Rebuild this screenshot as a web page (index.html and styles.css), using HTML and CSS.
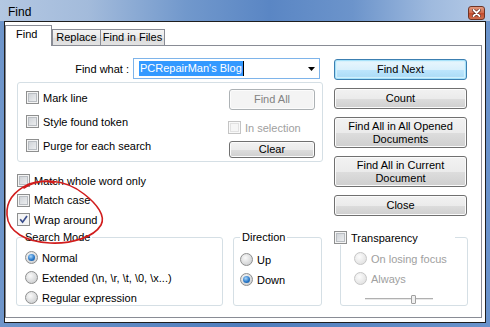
FILE: index.html
```html
<!DOCTYPE html>
<html lang="en">
<head>
    <meta charset="UTF-8">
    <title>Find</title>
    <link rel="stylesheet" href="styles.css">
</head>
<body>

<div class="window">
    <div class="titlebar">
        <span class="title">Find</span>
        <span class="close-btn">
            <svg width="9" height="8" viewBox="0 0 9 8">
                <path d="M1.5 1 L7.5 7 M7.5 1 L1.5 7" stroke="#5a2418" stroke-width="3.2" stroke-linecap="round"/>
                <path d="M1.5 1 L7.5 7 M7.5 1 L1.5 7" stroke="#fff" stroke-width="1.8" stroke-linecap="round"/>
            </svg>
        </span>
    </div>

    <div class="client">
        <div class="tabs">
            <div class="tab active">Find</div>
            <div class="tab tab-replace">Replace</div>
            <div class="tab tab-files">Find in Files</div>
        </div>

        <div class="panel">
            <div class="top">
                <div class="left-col">
                    <div class="find-row">
                        <label>Find what :</label>
                        <div class="combo">
                            <span class="sel">PCRepairMan's Blog</span><span class="caret"></span>
                            <svg class="arrow" width="7" height="4" viewBox="0 0 7 4"><path d="M0 0 H7 L3.5 4 Z" fill="#000"/></svg>
                        </div>
                    </div>

                    <div class="options">
                        <div class="opt-list">
                            <div class="check"><span class="box"></span>Mark line</div>
                            <div class="check"><span class="box"></span>Style found token</div>
                            <div class="check"><span class="box"></span>Purge for each search</div>
                        </div>
                        <div class="opt-side">
                            <div class="btn disabled">Find All</div>
                            <div class="check disabled in-sel"><span class="box"></span>In selection</div>
                            <div class="btn small">Clear</div>
                        </div>
                    </div>

                    <div class="matches">
                        <div class="check"><span class="box"></span>Match whole word only</div>
                        <div class="check"><span class="box"></span>Match case</div>
                        <div class="check"><span class="box checked">
                            <svg width="9" height="9" viewBox="0 0 9 9"><path d="M1.2 4.2 L3.6 7.2 L8 1" fill="none" stroke="#3a4d8c" stroke-width="1.7"/></svg>
                        </span>Wrap around</div>
                    </div>
                </div>

                <div class="actions">
                    <div class="btn primary">Find Next</div>
                    <div class="btn">Count</div>
                    <div class="btn tall">Find All in All Opened<br>Documents</div>
                    <div class="btn tall">Find All in Current<br>Document</div>
                    <div class="btn">Close</div>
                </div>
            </div>

            <div class="bottom">
                <fieldset class="group mode">
                    <legend>Search Mode</legend>
                    <div class="radio-list">
                        <div class="radio"><span class="dot on"></span>Normal</div>
                        <div class="radio"><span class="dot"></span>Extended (\n, \r, \t, \0, \x...)</div>
                        <div class="radio"><span class="dot"></span>Regular expression</div>
                    </div>
                </fieldset>

                <fieldset class="group direction">
                    <legend>Direction</legend>
                    <div class="radio-list">
                        <div class="radio"><span class="dot"></span>Up</div>
                        <div class="radio"><span class="dot on"></span>Down</div>
                    </div>
                </fieldset>

                <fieldset class="group transparency">
                    <legend><span class="check"><span class="box"></span>Transparency</span></legend>
                    <div class="radio-list">
                        <div class="radio disabled"><span class="dot"></span>On losing focus</div>
                        <div class="radio disabled"><span class="dot"></span>Always</div>
                        <div class="slider"><span class="thumb"></span></div>
                    </div>
                </fieldset>
            </div>
        </div>
    </div>

    <!-- red marker drawn over the screenshot -->
    <svg class="annotation" width="490" height="327" viewBox="0 0 490 327">
        <path d="M24 188 C38 178, 64 178, 84 194 C97 204, 106 216, 101 225 C94 237, 72 244, 50 243 C26 242, 8 232, 7 215 C6 201, 14 191, 29 184 C40 180, 48 181, 54 183"
              fill="none" stroke="#d11d1d" stroke-width="1.6" stroke-linecap="round"/>
    </svg>
</div>

</body>
</html>
```

FILE: styles.css
```css
* {
    box-sizing: border-box;
}
body {
    margin: 0;
    font-family: "Liberation Sans", Arial, sans-serif;
    font-size: 11px;
    color: #000;
    background: #fff;
}
.window {
    position: relative;
    width: 490px;
    height: 327px;
    padding: 0 4px 4px;
    display: flex;
    flex-direction: column;
    background: linear-gradient(90deg, #6e95ca, #4f7dbd 50%, #6a93cb);
}
.titlebar {
    height: 21px;
    margin: 0 -4px;
    padding: 0 5px 0 8px;
    display: flex;
    align-items: flex-start;
    justify-content: space-between;
    background: linear-gradient(90deg, #b3c7e2 0%, #a3bbdb 18%, #7198cc 38%, #5a86c4 55%, #6c94cb 72%, #9fbade 88%, #b6cbe7 100%);
}
.title {
    font-size: 12px;
    margin-top: 5px;
}
.close-btn {
    width: 17px;
    height: 14px;
    margin-top: 6px;
    display: flex;
    align-items: center;
    justify-content: center;
    border: 1px solid #6d3527;
    border-radius: 3px;
    background: linear-gradient(#e39a80, #d06a4c 50%, #c24a2d 51%, #d0704f);
}
.client {
    flex: 1;
    background: #fff;
    border: 1px solid #1e1e1e;
    display: flex;
    flex-direction: column;
}
.tabs {
    height: 23px;
    display: flex;
    align-items: flex-end;
}
.tab {
    height: 16px;
    border: 1px solid #898c95;
    border-bottom: none;
    background: linear-gradient(#f3f3f3, #e9e9e9 50%, #dcdcdc 51%, #e2e2e2);
    text-align: center;
    line-height: 15px;
}
.tab.active {
    width: 47px;
    height: 21px;
    margin-bottom: -1px;
    padding: 0 0 3px 10px;
    text-align: left;
    line-height: 17px;
    background: #fff;
    position: relative;
    z-index: 1;
}
.tab-replace {
    width: 49px;
}
.tab-files {
    width: 65px;
    margin-left: -1px;
}
.panel {
    height: 273px;
    margin-right: 3px;
    border: 1px solid #898c95;
    background: #fff;
    padding: 12px 0 0 11px;
}
.top {
    display: flex;
    gap: 11px;
}
.left-col {
    width: 306px;
}
.find-row {
    height: 21px;
    display: flex;
    align-items: center;
    justify-content: flex-end;
    gap: 4px;
    padding-right: 3px;
}
.combo {
    width: 187px;
    height: 21px;
    display: flex;
    align-items: center;
    padding: 0 4px 0 5px;
    border: 1px solid #7eb4ea;
}
.sel {
    background: #3399ff;
    color: #fff;
    line-height: 15px;
    padding: 0 1px;
}
.caret {
    width: 1px;
    height: 15px;
    background: #000;
}
.arrow {
    margin-left: auto;
}
.options {
    height: 80px;
    margin-top: 3px;
    padding: 7px 7px 0 8px;
    display: flex;
    justify-content: space-between;
    border: 1px solid #d5dfe5;
    border-radius: 3px;
}
.opt-list {
    display: flex;
    flex-direction: column;
    gap: 9px;
}
.opt-side {
    width: 86px;
    margin-top: -1px;
    display: flex;
    flex-direction: column;
}
.in-sel {
    margin: 10px 0 6px -1px;
}
.matches {
    margin-top: 11px;
    display: flex;
    flex-direction: column;
    gap: 4.5px;
}

/* checkboxes and radios */
.check, .radio {
    height: 15px;
    display: flex;
    align-items: center;
    gap: 4px;
    white-space: nowrap;
}
.box {
    width: 13px;
    height: 13px;
    flex: none;
    display: flex;
    align-items: center;
    justify-content: center;
    border: 1px solid #8e8f8f;
    background: linear-gradient(135deg, #c9cdd2, #f3f4f5);
    box-shadow: inset 0 0 0 1px #f4f4f4, inset 0 0 0 2px #b9bdc2;
}
.box.checked {
    background: #f4f4f4;
    box-shadow: none;
}
.check.disabled {
    color: #a0a0a0;
}
.check.disabled .box {
    border-color: #c4c4c4;
    background: #f6f6f6;
    box-shadow: inset 0 0 0 1px #f9f9f9, inset 0 0 0 2px #e2e2e2;
}
.dot {
    width: 13px;
    height: 13px;
    flex: none;
    border-radius: 50%;
    border: 1px solid #8e8f8f;
    background: radial-gradient(circle at 40% 35%, #fafafa, #d9dadb 60%, #c4c6c9);
    display: flex;
    align-items: center;
    justify-content: center;
}
.dot.on::after {
    content: "";
    width: 7px;
    height: 7px;
    border-radius: 50%;
    background: radial-gradient(circle at 40% 35%, #a9d6fa, #2a79c9 55%, #124d8f);
}
.radio.disabled {
    color: #a0a0a0;
}
.radio.disabled .dot {
    border-color: #c6c6c6;
    background: radial-gradient(circle at 40% 35%, #fcfcfc, #e8e8e8 60%, #dedede);
}

/* buttons */
.btn {
    height: 21px;
    display: flex;
    align-items: center;
    justify-content: center;
    text-align: center;
    line-height: 13px;
    border: 1px solid #707070;
    border-radius: 3px;
    background: linear-gradient(#f2f2f2, #ebebeb 50%, #dddddd 51%, #cfcfcf);
    box-shadow: inset 0 0 0 1px #fbfbfb;
}
.btn.small {
    height: 17px;
}
.btn.tall {
    height: 31px;
}
.btn.primary {
    border-color: #3c7fb1;
    background: linear-gradient(#eaf6fd, #d9f0fc 50%, #bee6fd 51%, #a7d9f5);
    box-shadow: inset 0 0 0 1px #a6e1f9, inset 0 0 1px 2px #d6f1fc;
}
.btn.disabled {
    color: #838383;
    border-color: #adb2b5;
    background: #f4f4f4;
    box-shadow: inset 0 0 0 1px #fcfcfc;
}
.actions {
    width: 133px;
    margin-top: 1px;
    display: flex;
    flex-direction: column;
    gap: 8px;
}

/* group boxes at the bottom */
.bottom {
    height: 76px;
    margin-top: 3px;
    display: flex;
}
.group {
    margin: 0;
    padding: 6px 6px 0;
    min-width: 0;
    border: 1px solid #d5dfe5;
    border-radius: 3px;
}
.group legend {
    padding: 0 2px;
    line-height: 14px;
}
.radio-list {
    display: flex;
    flex-direction: column;
    gap: 5px;
}
.mode {
    width: 207px;
    margin-left: -1px;
}
.mode .radio-list {
    margin-left: 2px;
}
.direction {
    width: 89px;
    margin-left: 10px;
    padding-top: 8px;
}
.transparency {
    width: 128px;
    margin-left: 18px;
}
.transparency legend {
    width: 121px;
    margin-left: -13px;
    padding: 0;
    background: #fff;
}
.transparency .radio-list {
    margin-left: 7px;
}
.slider {
    position: relative;
    width: 68px;
    height: 9px;
    margin: 4px 0 0 11px;
    background: linear-gradient(#fff 3px, #b0b0b0 3px, #b0b0b0 4px, #e8e8e8 4px, #e8e8e8 5px, #fff 5px);
}
.thumb {
    position: absolute;
    left: 46px;
    top: 0;
    width: 5px;
    height: 9px;
    border: 1px solid #a0a0a0;
    border-radius: 1px;
    background: #f0f0f0;
}
.annotation {
    position: absolute;
    top: 0;
    left: 0;
    pointer-events: none;
}
```
